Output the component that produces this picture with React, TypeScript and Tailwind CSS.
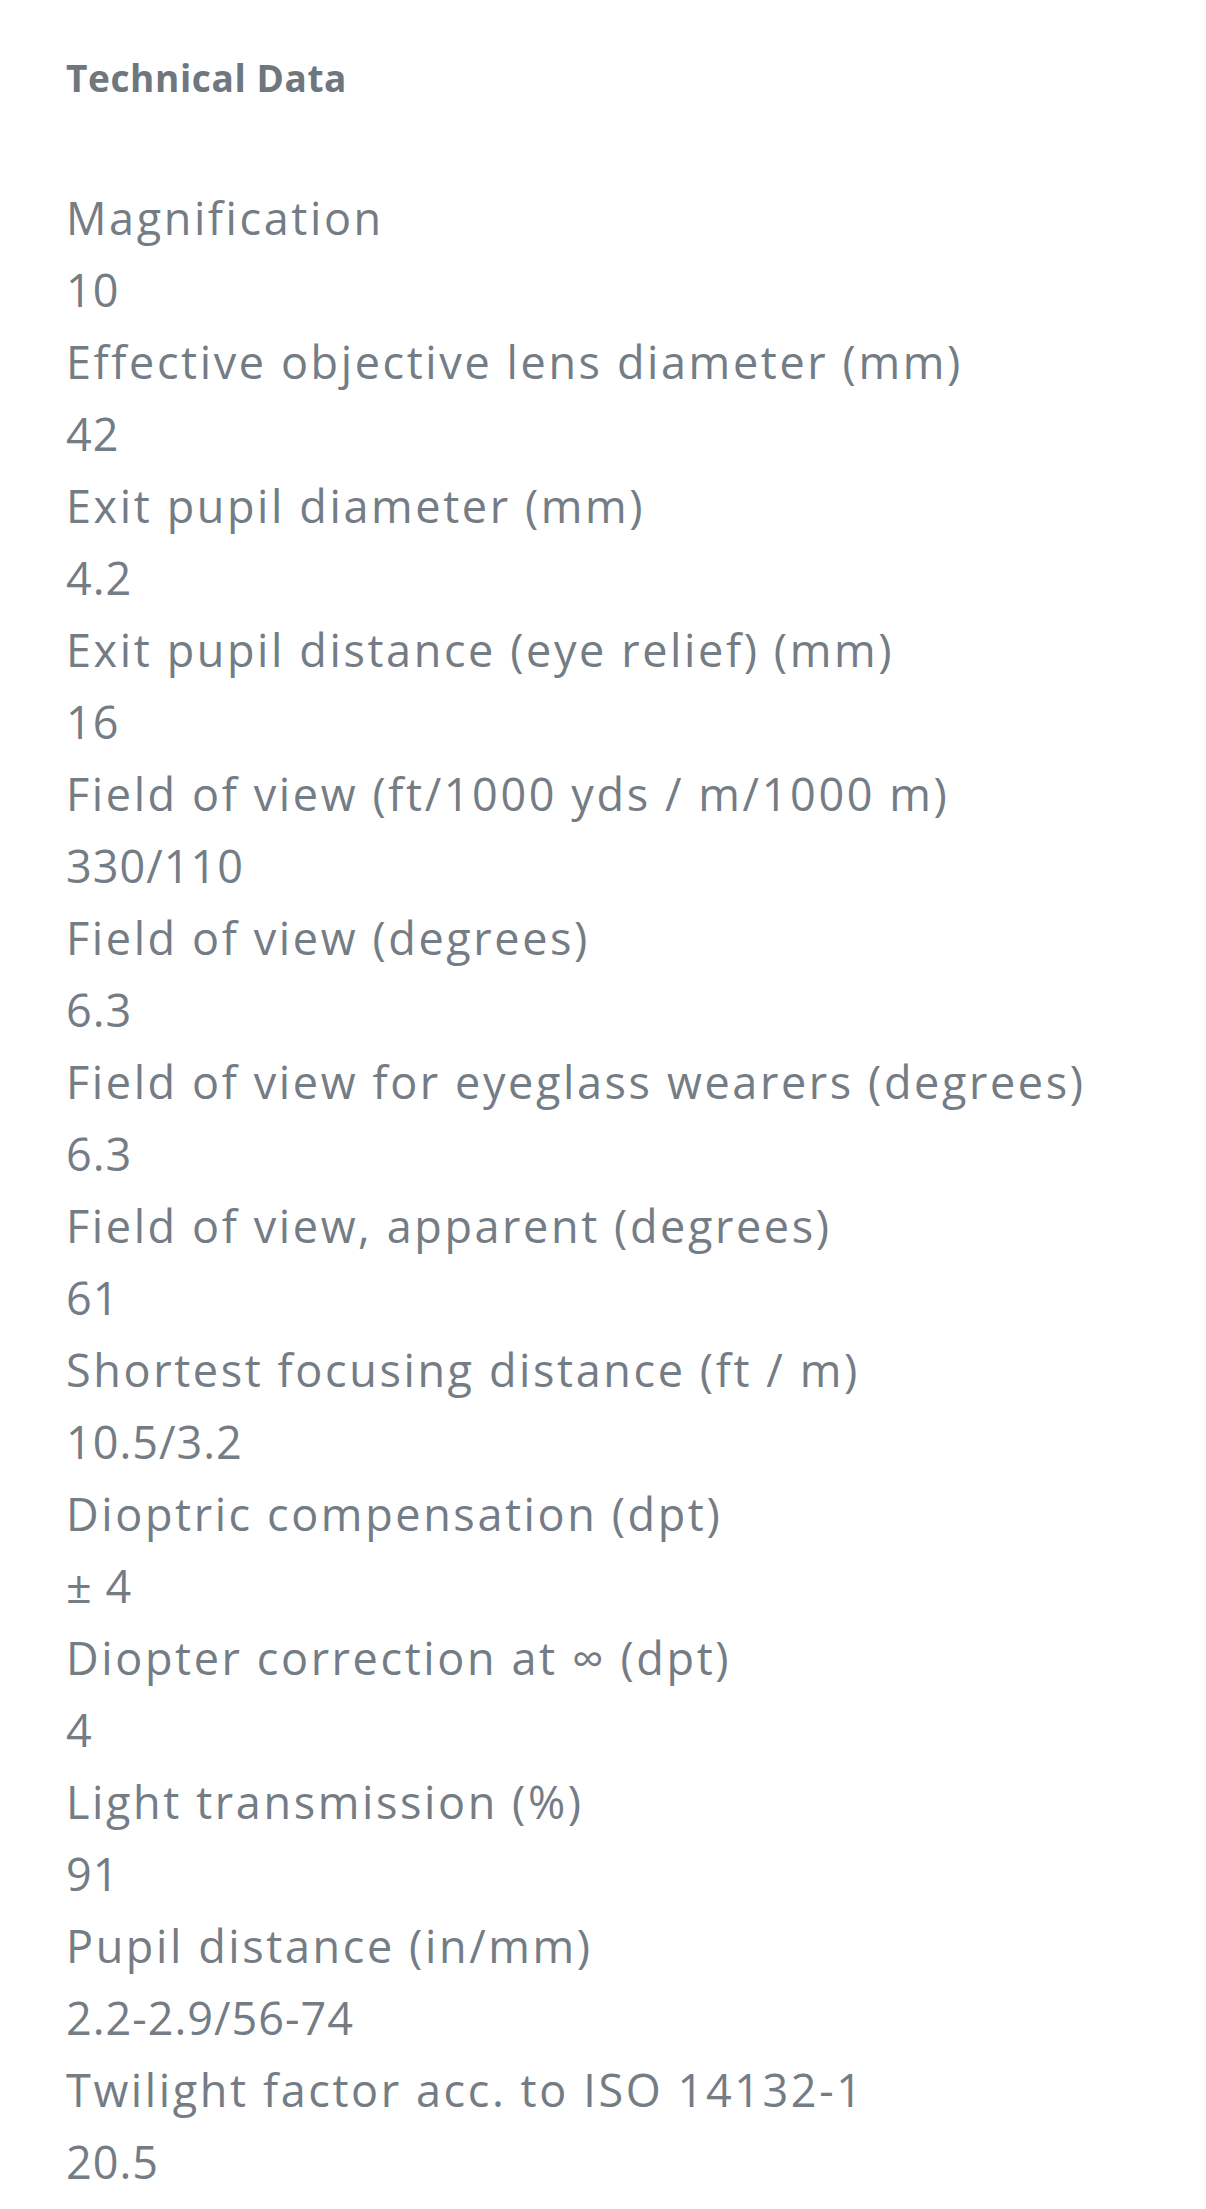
import React from "react";

const rows: [string, string][] = [
  ["Magnification", "10"],
  ["Effective objective lens diameter (mm)", "42"],
  ["Exit pupil diameter (mm)", "4.2"],
  ["Exit pupil distance (eye relief) (mm)", "16"],
  ["Field of view (ft/1000 yds / m/1000 m)", "330/110"],
  ["Field of view (degrees)", "6.3"],
  ["Field of view for eyeglass wearers (degrees)", "6.3"],
  ["Field of view, apparent (degrees)", "61"],
  ["Shortest focusing distance (ft / m)", "10.5/3.2"],
  ["Dioptric compensation (dpt)", "± 4"],
  ["Diopter correction at ∞ (dpt)", "4"],
  ["Light transmission (%)", "91"],
  ["Pupil distance (in/mm)", "2.2-2.9/56-74"],
  ["Twilight factor acc. to ISO 14132-1", "20.5"],
];

export default function App() {
  return (
    <div className="min-h-screen bg-white px-[66px] pt-[50px] pb-[12px] font-['Open_Sans',sans-serif] text-[#747c85]">
      <h2 className="text-[37px] leading-[56px] font-bold tracking-[0.6px] text-[#6e767e]">Technical Data</h2>
      <dl className="mt-[76px] text-[45px] leading-[72px] tracking-[2.6px]">
        {rows.map(([k, v]) => (
          <React.Fragment key={k}>
            <dt>{k}</dt>
            <dd className="tracking-[1px]">{v}</dd>
          </React.Fragment>
        ))}
      </dl>
    </div>
  );
}
